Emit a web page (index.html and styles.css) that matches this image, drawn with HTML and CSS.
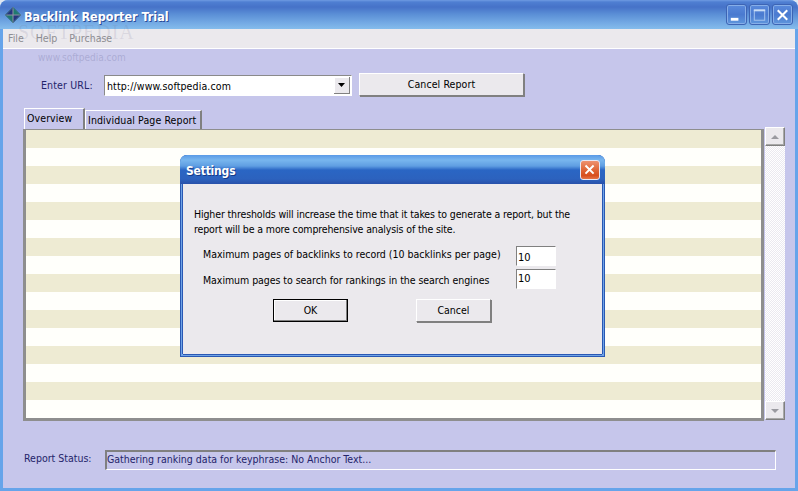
FILE: index.html
```html
<!DOCTYPE html>
<html lang="en">
<head>
<meta charset="utf-8">
<title>Backlink Reporter Trial</title>
<link rel="stylesheet" href="styles.css">
</head>
<body>
<div class="window">
  <header class="titlebar">
    <svg class="appicon" viewBox="0 0 16 16" width="16" height="16">
      <polygon points="8,0 8,8 0,8" fill="#25357e"/>
      <polygon points="8,0 16,8 8,8" fill="#1f7a70"/>
      <polygon points="0,8 8,8 8,16" fill="#1f7a70"/>
      <polygon points="8,8 16,8 8,16" fill="#25357e"/>
      <path d="M8 0V16M0 8H16" stroke="#8d93a2" stroke-width="1"/>
      <polygon points="8,0.5 15.5,8 8,15.5 0.5,8" fill="none" stroke="#3c6f86" stroke-width="1"/>
    </svg>
    <span class="apptitle">Backlink Reporter Trial</span>
    <div class="caption">
      <div class="capbtn">
        <svg viewBox="0 0 20 20" width="20" height="20"><rect x="4" y="13" width="8" height="3" fill="#fff"/></svg>
      </div>
      <div class="capbtn">
        <svg viewBox="0 0 20 20" width="20" height="20"><rect x="4.5" y="5.5" width="11" height="10" fill="none" stroke="#a9c6ee" stroke-width="1"/><rect x="4" y="4" width="12" height="2" fill="#c9dcf5"/></svg>
      </div>
      <div class="capbtn">
        <svg viewBox="0 0 20 20" width="20" height="20"><path d="M5 5L15 15M15 5L5 15" stroke="#fff" stroke-width="2.2"/></svg>
      </div>
    </div>
  </header>
  <nav class="menubar">
    <span class="menuitem">File</span>
    <span class="menuitem">Help</span>
    <span class="menuitem">Purchase</span>
  </nav>
  <main class="client">
    <div class="urlrow">
      <label class="urllabel">Enter URL:</label>
      <div class="combo">
        <span class="combotext">http://www.softpedia.com</span>
        <span class="combobtn"><svg viewBox="0 0 8 4" width="8" height="4"><polygon points="0,0 7,0 3.5,4" fill="#000"/></svg></span>
      </div>
      <button class="btn btn-report">Cancel Report</button>
    </div>
    <div class="tabs">
      <div class="tab tab-active">Overview</div>
      <div class="tab">Individual Page Report</div>
    </div>
    <div class="panelrow">
      <div class="panel"><div class="stripes"></div></div>
      <div class="scrollbar">
        <div class="sbtn"><svg viewBox="0 0 8 4" width="8" height="4"><polygon points="4,0 8,4 0,4" fill="#9a9aa0"/></svg></div>
        <div class="strack"></div>
        <div class="sbtn"><svg viewBox="0 0 8 4" width="8" height="4"><polygon points="0,0 8,0 4,4" fill="#9a9aa0"/></svg></div>
      </div>
    </div>
    <div class="statusrow">
      <span class="statuslabel">Report Status:</span>
      <div class="statusfield">Gathering ranking data for keyphrase: No Anchor Text...</div>
    </div>
  </main>

  <div class="watermark">
    <span class="wm-big">SOFTPEDIA</span>
    <span class="wm-small">www.softpedia.com</span>
  </div>

  <section class="dialog">
    <header class="dlgtitle">
      <span class="dlgname">Settings</span>
      <div class="dlgclose">
        <svg viewBox="0 0 20 20" width="20" height="20"><path d="M5 5L14 14M14 5L5 14" stroke="#fff" stroke-width="2.2"/></svg>
      </div>
    </header>
    <div class="dlgbody">
      <p class="dlgtext">Higher thresholds will increase the time that it takes to generate a report, but the<br>report will be a more comprehensive analysis of the site.</p>
      <div class="dlgfields">
        <span class="fieldlabel">Maximum pages of backlinks to record (10 backlinks per page)</span>
        <div class="field">10</div>
        <span class="fieldlabel fieldlabel-low">Maximum pages to search for rankings in the search engines</span>
        <div class="field field-low">10</div>
      </div>
      <div class="dlgbtns">
        <button class="btn btn-dlg btn-default">OK</button>
        <button class="btn btn-dlg">Cancel</button>
      </div>
    </div>
  </section>
</div>
</body>
</html>
```

FILE: styles.css
```css
* { box-sizing: border-box; }
html, body { margin: 0; padding: 0; }
body {
  width: 798px;
  height: 491px;
  overflow: hidden;
  background: #dfe6f2;
  font-family: "DejaVu Sans Condensed", "DejaVu Sans", sans-serif;
  font-stretch: condensed;
  font-size: 10.5px;
}
.window {
  position: relative;
  width: 798px;
  height: 491px;
  display: flex;
  flex-direction: column;
  border-radius: 8px 8px 0 0;
  overflow: hidden;
  background: #66a4ea;
}
.titlebar {
  height: 29px;
  flex: none;
  display: flex;
  align-items: center;
  padding: 0 5px;
  background: linear-gradient(#6f9be2 0, #4f7fd2 2px, #4672c8 7px, #5a8ed6 14px, #74aae4 23px, #84bcec 29px);
}
.appicon { flex: none; margin: 1px 3px 0 0; }
.apptitle {
  font-weight: 700;
  font-size: 12.5px;
  padding-top: 3px;
  color: #fff;
  text-shadow: 1px 1px 0 #2a4c98;
}
.caption { margin-left: auto; display: flex; gap: 2px; }
.capbtn {
  width: 21px;
  height: 21px;
  border: 1px solid #3d64b4;
  border-radius: 3px;
  background: linear-gradient(#5a8adc, #4a7ad0 50%, #5f96dc);
  box-shadow: inset 0 0 0 1px #86aee8;
  display: flex;
  align-items: center;
  justify-content: center;
}
.menubar {
  height: 20px;
  flex: none;
  margin: 0 3px;
  display: flex;
  align-items: center;
  gap: 12px;
  padding: 0 0 2px 5px;
  background: #ebe9ed;
  border-bottom: 1px solid #fff;
  color: #8e8e92;
}
.client {
  flex: 1;
  margin: 0 3px 3px;
  background: #c6c6eb;
  padding: 24px 0 0 21px;
  display: flex;
  flex-direction: column;
  color: #24246a;
}
.urlrow { display: flex; align-items: flex-start; height: 23px; }
.urllabel { width: 80px; padding: 6px 0 0 17px; flex: none; letter-spacing: 0.15px; }
.combo {
  width: 248px;
  height: 21px;
  margin-top: 2px;
  display: flex;
  align-items: center;
  justify-content: space-between;
  background: #fff;
  border-top: 1px solid #8a8a8a;
  border-left: 1px solid #8a8a8a;
  border-right: 1px solid #fff;
  border-bottom: 1px solid #fff;
  padding: 0 1px 0 2px;
  color: #000;
}
.combotext { letter-spacing: 0.12px; }
.combobtn {
  width: 16px;
  height: 17px;
  background: #ebe9ed;
  border-right: 1px solid #808080;
  border-bottom: 1px solid #808080;
  box-shadow: inset 1px 1px 0 #fff;
  display: flex;
  align-items: center;
  justify-content: center;
}
.btn {
  font-family: inherit;
  font-stretch: condensed;
  font-size: 10.5px;
  color: #000;
  background: #ebe9ed;
  border: 1px solid;
  border-color: #fff #808080 #808080 #fff;
  box-shadow: 1px 1px 0 #808080;
  padding: 0 0 2px;
}
.btn-report { width: 165px; height: 23px; margin-left: 7px; letter-spacing: 0.1px; }
.tabs { display: flex; align-items: flex-end; margin-top: 12px; height: 21px; flex: none; }
.tab {
  height: 19px;
  padding: 3px 2px 0;
  background: #c6c6eb;
  border-top: 1px solid #fff;
  border-left: 1px solid #fff;
  border-right: 2px solid #808080;
  color: #000;
  white-space: nowrap;
  width: 117px;
  letter-spacing: 0.1px;
}
.tab-active { height: 21px; width: 61px; padding-top: 3px; }
.panelrow { display: flex; flex: none; height: 293px; margin-top: -2px; }
.panel {
  width: 741px;
  height: 292px;
  margin: 2px 1px 0 -1px;
  border: solid #8e8e8e;
  border-width: 1px 3px 3px 3px;
  background: #fff;
}
.stripes {
  height: 100%;
  background: repeating-linear-gradient(#eeebd3 0, #eeebd3 18px, #fffffb 18px, #fffffb 36px);
}
.scrollbar {
  width: 20px;
  height: 293px;
  display: flex;
  flex-direction: column;
}
.sbtn {
  height: 19px;
  flex: none;
  background: #ebe9ed;
  border: 1px solid;
  border-color: #fff #808080 #808080 #fff;
  box-shadow: inset -1px -1px 0 #a8a8a8;
  display: flex;
  align-items: center;
  justify-content: center;
}
.strack {
  flex: 1;
  background: conic-gradient(#fff 25%, #ebe9f0 0 50%, #fff 0 75%, #ebe9f0 0) 0 0 / 2px 2px;
}
.statusrow { display: flex; align-items: flex-start; margin-top: 30px; }
.statuslabel { width: 81px; padding-top: 2px; flex: none; }
.statusfield {
  width: 671px;
  height: 20px;
  border-top: 2px solid #808080;
  border-left: 2px solid #808080;
  border-right: 1px solid #fff;
  border-bottom: 1px solid #fff;
  padding: 1px 0 0;
  white-space: nowrap;
}
.watermark {
  position: absolute;
  left: 18px;
  top: 20px;
  display: flex;
  flex-direction: column;
  color: rgba(120, 120, 150, 0.16);
  pointer-events: none;
}
.wm-big { font-family: "Liberation Serif", serif; font-size: 20px; letter-spacing: 1px; line-height: 24px; font-stretch: normal; }
.wm-small { font-size: 10px; line-height: 12px; margin: 8px 0 0 20px; color: rgba(120, 120, 170, 0.35); }
.dialog {
  position: absolute;
  left: 180px;
  top: 155px;
  width: 425px;
  height: 202px;
  display: flex;
  flex-direction: column;
  border-radius: 7px 7px 0 0;
  background: #6fa4e6;
  padding: 0 3px 3px;
  overflow: hidden;
  box-shadow: inset 0 0 0 1px #2a58b4;
}
.dlgtitle {
  height: 29px;
  flex: none;
  margin: 0 -3px;
  padding: 0 5px 0 6px;
  display: flex;
  align-items: center;
  justify-content: space-between;
  background: linear-gradient(#5a9ae6 0, #78b6ee 5px, #5f9ee2 11px, #2a66c4 15px, #2c62be 24px, #2850aa 29px);
}
.dlgname {
  font-weight: 700;
  font-size: 12px;
  padding-top: 3px;
  letter-spacing: -0.2px;
  color: #fff;
  text-shadow: 1px 1px 0 #143a88;
}
.dlgclose {
  width: 20px;
  height: 20px;
  border: 1px solid #e8e8f4;
  border-radius: 3px;
  background: linear-gradient(#ee9270, #e06a3c 45%, #d84e1e 80%, #e47448);
  display: flex;
  align-items: center;
  justify-content: center;
}
.dlgbody {
  flex: 1;
  background: #ebe9ed;
  color: #000;
  padding: 23px 0 0 11px;
  display: flex;
  flex-direction: column;
  box-shadow: 0 1px 0 #2a58b4, -1px 0 0 #2a58b4, 1px 0 0 #2a58b4;
}
.dlgtext { margin: 0; line-height: 15px; white-space: nowrap; letter-spacing: -0.13px; }
.dlgfields {
  display: grid;
  grid-template-columns: 313px 40px;
  grid-auto-rows: 20px;
  row-gap: 3px;
  align-items: center;
  margin: 9px 0 0 9px;
}
.fieldlabel { white-space: nowrap; margin-top: -4px; }
.fieldlabel-low { margin-top: 2px; letter-spacing: -0.05px; }
.field {
  height: 20px;
  background: #fff;
  border-top: 1px solid #808080;
  border-left: 1px solid #808080;
  border-right: 1px solid #fff;
  border-bottom: 1px solid #fff;
  padding: 4px 0 0 1px;
  font-size: 11px;
}
.field-low { padding-top: 2px; }
.dlgbtns { display: flex; gap: 68px; margin: 10px 0 0 79px; }
.btn-dlg { width: 75px; height: 23px; }
.btn-default { border: 1px solid #000; box-shadow: inset -1px -1px 0 #808080, inset 1px 1px 0 #fff; }
```
